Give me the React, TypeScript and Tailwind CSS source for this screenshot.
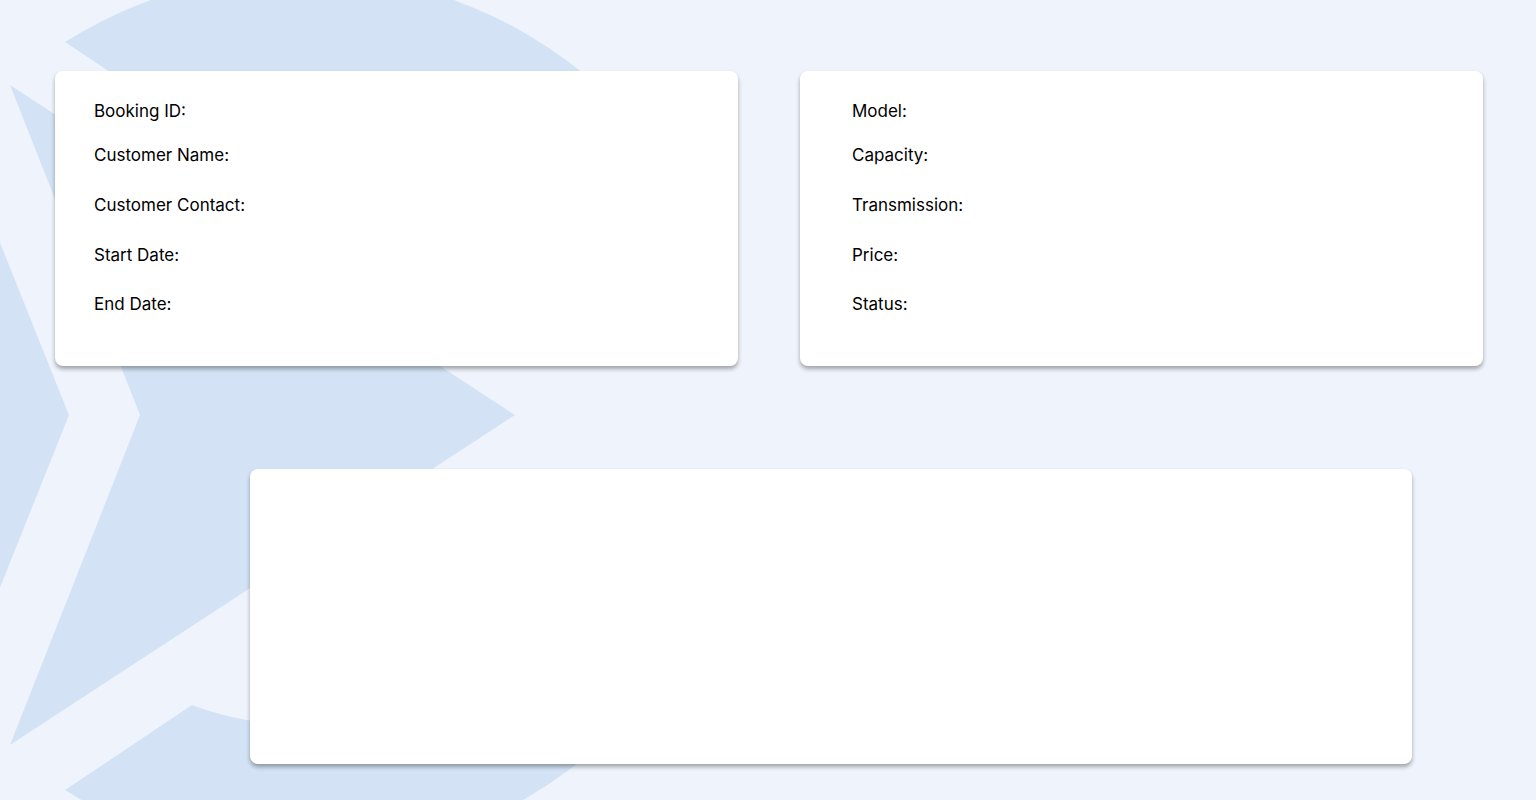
// Booking details page: two info cards on top, one wide empty panel below, logo drawn in the background.

const bookingFields = ['Booking ID:', 'Customer Name:', 'Customer Contact:', 'Start Date:', 'End Date:'];
const carFields = ['Model:', 'Capacity:', 'Transmission:', 'Price:', 'Status:'];

// gap above each row, first row sits under the card padding
const rowGaps = ['mt-0', 'mt-[20px]', 'mt-[26px]', 'mt-[26px]', 'mt-[25px]'];

function BackgroundLogo() {
  return (
    <svg className="absolute inset-0 h-full w-full" viewBox="0 0 1536 800" preserveAspectRatio="none">
      <g fill="#d3e3f5">
        <path d="M65 42 A445 445 0 0 1 686 193 L568 261 A309 309 0 0 0 192 127 Z" />
        <path d="M65 790 A445 445 0 0 0 686 639 L568 571 A309 309 0 0 1 192 705 Z" />
        <polygon points="10,85 515,415 10,745 140,415" />
        <polygon points="-1,240 69,415 -1,590" />
      </g>
    </svg>
  );
}

function InfoCard({ fields, padLeft }: { fields: string[]; padLeft: string }) {
  return (
    <div className={`h-[295px] w-[683px] rounded-lg bg-white pt-[28px] shadow-[0_3px_4px_rgba(0,0,0,0.33)] ${padLeft}`}>
      <div className="flex flex-col">
        {fields.map((f, i) => (
          <div key={f} className={`text-[17px] leading-6 text-black ${rowGaps[i]}`}>
            {f}
          </div>
        ))}
      </div>
    </div>
  );
}

export default function App() {
  return (
    <div
      className="relative h-[800px] w-full overflow-hidden bg-[#eff4fc]"
      style={{ fontFamily: 'Inter, "Noto Sans", sans-serif' }}
    >
      <BackgroundLogo />
      <div className="relative flex flex-col pt-[71px]">
        <div className="flex gap-[62px] pl-[55px]">
          <InfoCard fields={bookingFields} padLeft="pl-[39px]" />
          <InfoCard fields={carFields} padLeft="pl-[52px]" />
        </div>
        <div className="ml-[250px] mt-[103px] h-[295px] w-[1162px] rounded-lg bg-white shadow-[0_3px_4px_rgba(0,0,0,0.33)]" />
      </div>
    </div>
  );
}
